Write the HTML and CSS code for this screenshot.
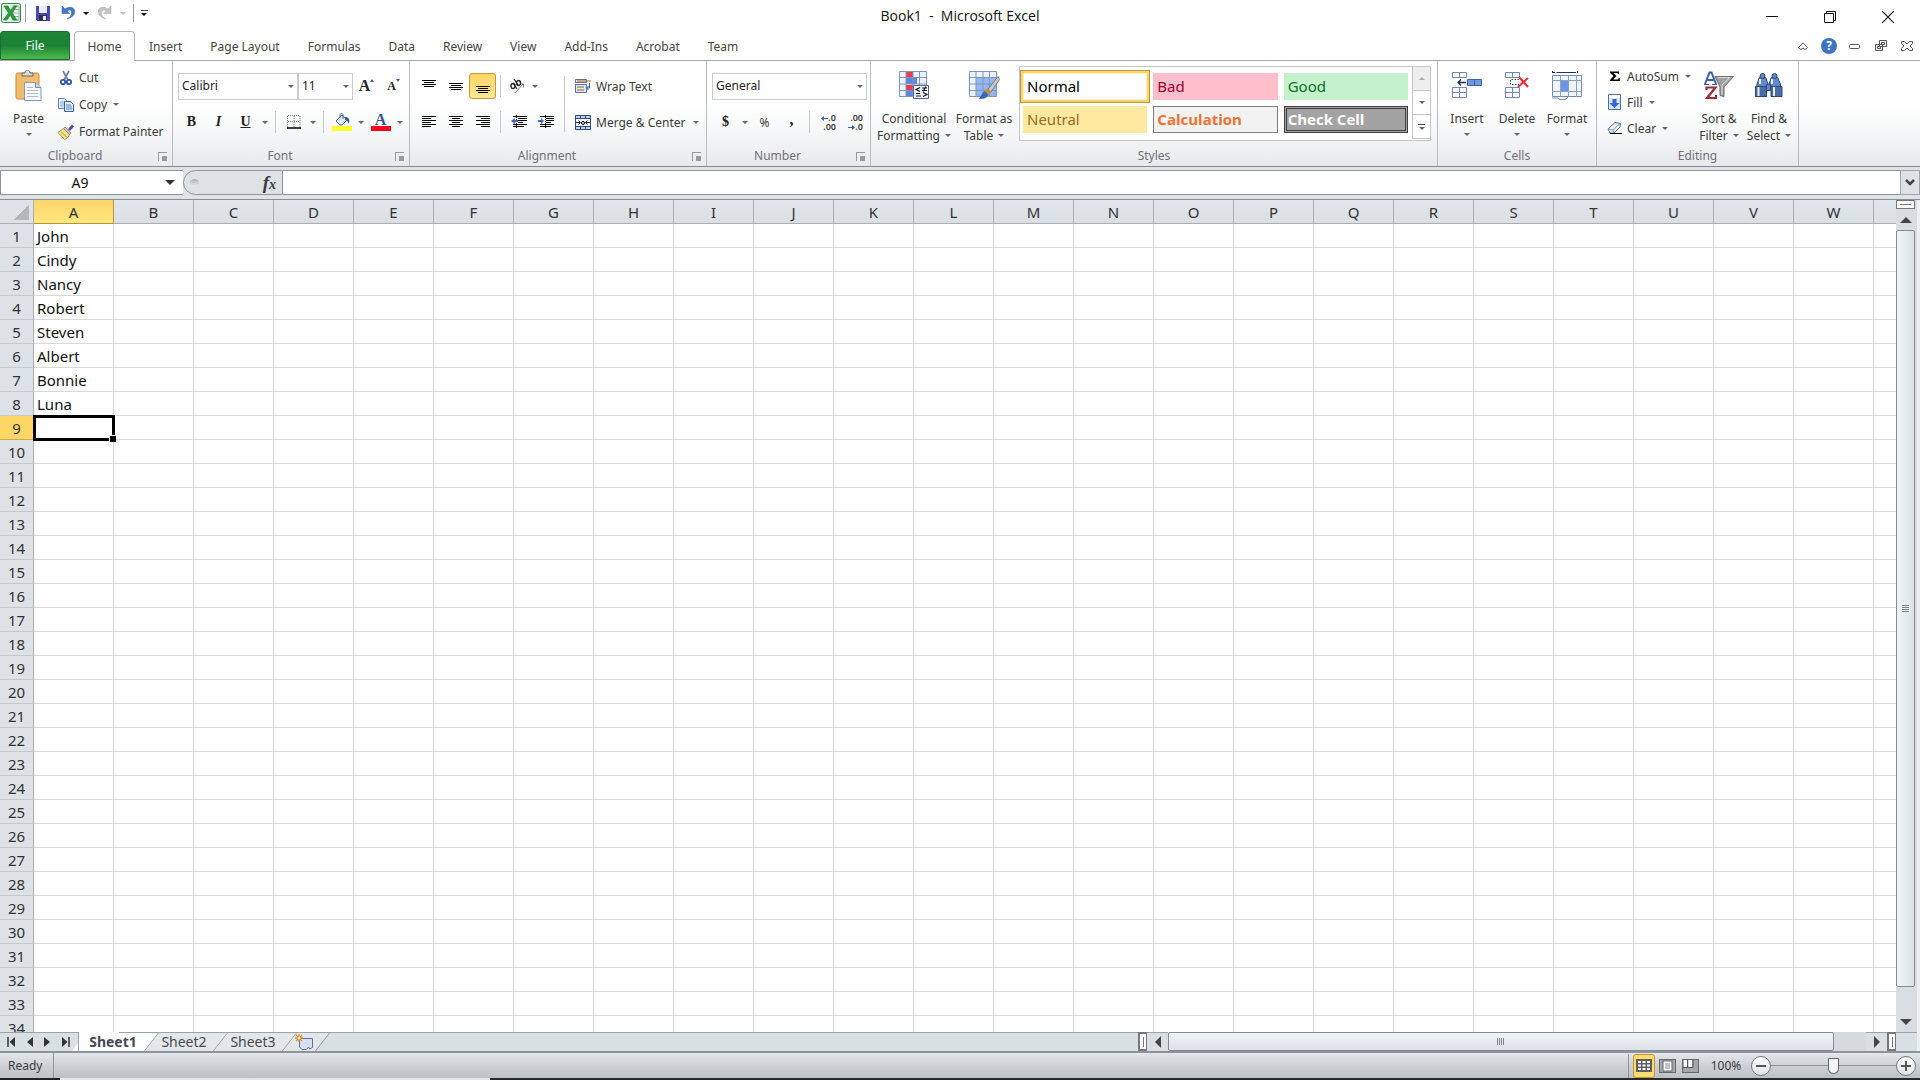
FILE: index.html
```html
<!DOCTYPE html>
<html lang="en">
<head>
    <meta charset="UTF-8">
    <meta name="viewport" content="width=device-width, initial-scale=1.0">
    <title>Book1 - Microsoft Excel</title>
    <link rel="stylesheet" href="styles.css">
</head>
<body>
<header class="titlebar">
    <div class="quick-access">
        <svg class="app-icon" width="20" height="20" viewBox="0 0 20 20"><rect x=".5" y=".5" width="19" height="19" rx="2" fill="#e4f2e2" stroke="#2f8a45"/><rect x="12" y="3" width="6" height="14" fill="#fff" stroke="#7dba83"/><path d="M12 6.500h6M12 10h6M12 13.500h6" stroke="#7dba83"/><path d="M3 3h4l2.500 4.500L13 3h3l-5 7 5 7h-4l-2.700-4.800L6 17H2.500l5-7z" fill="#2c9a43" stroke="#1c7531" stroke-width=".6"/></svg>
        <span class="sep"></span>
        <button class="qat-button" aria-label="Save"><svg width="14" height="15" viewBox="0 0 14 15"><path d="M0 0h14v15H1.500L0 13.500z" fill="#4a47ae"/><rect x="3" y="0" width="8" height="7" fill="#e9edfb"/><rect x="3" y="9" width="8" height="6" fill="#2e2a66"/><rect x="7" y="10" width="3" height="4" fill="#e9edfb"/></svg></button>
        <button class="qat-button" aria-label="Undo"><svg width="14" height="14" viewBox="0 0 14 14"><path d="M1 0v7.500h7.500L6 5.200C8 3 10.800 4 10.600 7c-.2 2.500-2 4.500-4.600 6 4-1 7.500-3.500 7.700-7C14 1 8 0 4 3z" fill="#4377cb" stroke="#2d59ad" stroke-width=".5"/></svg></button>
        <button class="drop dark" aria-label="Undo list"></button>
        <button class="qat-button" aria-label="Redo"><svg width="14" height="14" viewBox="0 0 14 14"><path d="M13 0v7.500H5.500L8 5.200C6 3 3.200 4 3.400 7c.2 2.500 2 4.500 4.600 6-4-1-7.500-3.500-7.700-7C0 1 6 0 10 3z" fill="#c4c4c4" stroke="#a5a5a5" stroke-width=".5"/></svg></button>
        <button class="drop pale" aria-label="Redo list"></button>
        <span class="sep"></span>
        <button class="drop dark lined" aria-label="Customize Quick Access Toolbar"></button>
    </div>
    <div class="window-title">Book1&nbsp; -&nbsp; Microsoft Excel</div>
    <div class="window-buttons">
        <button aria-label="Minimize"><svg width="12" height="12"><path d="M0 5.500h12" stroke="#111"/></svg></button>
        <button aria-label="Restore"><svg width="12" height="12" fill="none" stroke="#111"><path d="M.5 2.500h9v9h-9zM2.500 2.500v-2h9v9h-2"/></svg></button>
        <button aria-label="Close"><svg width="12" height="12"><path d="M0 0l12 12M12 0L0 12" stroke="#111" stroke-width="1.200"/></svg></button>
    </div>
</header>

<nav class="tabs">
    <button class="tab file">File</button>
    <button class="tab active">Home</button>
    <button class="tab">Insert</button>
    <button class="tab">Page Layout</button>
    <button class="tab">Formulas</button>
    <button class="tab">Data</button>
    <button class="tab">Review</button>
    <button class="tab">View</button>
    <button class="tab">Add-Ins</button>
    <button class="tab">Acrobat</button>
    <button class="tab">Team</button>
    <div class="book-buttons">
        <button aria-label="Minimize the Ribbon"><svg width="10" height="8" viewBox="0 0 10 8"><path d="M.5 5.500L5 .8l4.500 4.700-1.500 1.700H6L5 6 4 7.200H2z" fill="#fff" stroke="#555"/></svg></button>
        <button class="help" aria-label="Help"><span>?</span></button>
        <button aria-label="Minimize Window"><svg width="12" height="6"><rect x=".5" y="1.500" width="10" height="4" rx="1" fill="#fff" stroke="#555"/></svg></button>
        <button aria-label="Restore Window"><svg width="12" height="12" fill="#fff" stroke="#555"><path d="M4.500.5h7v6h-7zM6.500 2.500h3v2h-3zM.5 4.500h7v6h-7zM2.500 6.500h3v2h-3z"/></svg></button>
        <button aria-label="Close Window"><svg width="12" height="10" viewBox="0 0 12 10"><path d="M.5.5h3L6 3 8.500.5h3v2L9 5l2.500 2.500v2h-3L6 7 3.500 9.500h-3v-2L3 5 .5 2.500z" fill="#fff" stroke="#555"/></svg></button>
    </div>
</nav>

<section class="ribbon">
    <div class="group clipboard">
        <div class="group-body">
            <button class="big">
                <svg width="28" height="32" viewBox="0 0 28 32"><rect x="1" y="3" width="23" height="26" rx="1.500" fill="#efbd6b" stroke="#c48b3c"/><path d="M7 6V3h3c0-4 5-4 5 0h3v3z" fill="#dcdcdc" stroke="#666"/><path d="M9.500 12.500h11l5.500 5v13H9.500z" fill="#f6f9ff" stroke="#8499bd"/><path d="M20.500 12.500v5H26" fill="#c9d8ef" stroke="#6f88b5"/><path d="M12 17.500h6M12 20.500h11M12 23.500h11M12 26.500h11" stroke="#a9b9d6"/></svg>
                <span>Paste</span><i class="drop-arrow"></i>
            </button>
            <div class="stack">
                <button class="small"><svg width="18" height="16" viewBox="0 0 18 16"><path d="M6 1l5 9M12 1L7 10" stroke="#72829c" stroke-width="1.800"/><circle cx="6" cy="12" r="2.200" fill="none" stroke="#2d59ad" stroke-width="1.800"/><circle cx="12" cy="12" r="2.200" fill="none" stroke="#2d59ad" stroke-width="1.800"/></svg>Cut</button>
                <button class="small"><svg width="18" height="16" viewBox="0 0 18 16"><path d="M1.500 1.500h6l2 2v8h-8z" fill="#edf3fd" stroke="#5b7fbd"/><path d="M3 5h5M3 7h4M3 9h4" stroke="#83a1d4"/><path d="M7.500 4.500h6l3 3v7h-9z" fill="#dfeafb" stroke="#3762ac"/><path d="M9 8h5M9 10h6M9 12h6" stroke="#5b84c9"/></svg>Copy<i class="drop-arrow"></i></button>
                <button class="small"><svg width="18" height="16" viewBox="0 0 18 16"><path d="M11 5l4-4.500 2 2L13 7z" fill="#54489b"/><path d="M8 3l6 6-1.500 1.500L6.500 4.500z" fill="#c8c8d2" stroke="#555" stroke-width=".6"/><path d="M6.500 4.500l6 6c-1 3-3 4.500-5 5L1 8.500z" fill="#f5e38c" stroke="#8d7430" stroke-width=".7"/><path d="M4 7.500l6 6" stroke="#b5973f"/></svg>Format Painter</button>
            </div>
        </div>
        <div class="group-label with-launcher">Clipboard<button class="launcher" aria-label="Clipboard options"></button></div>
    </div>

    <div class="group font">
        <div class="group-body rows">
            <div class="tool-row">
                <label class="combo family"><select aria-label="Font"><option>Calibri</option></select></label>
                <label class="combo size"><select aria-label="Font Size"><option>11</option></select></label>
                <button class="tool" aria-label="Increase Font Size"><span class="serif large">A</span><i class="tri-up"></i></button>
                <button class="tool" aria-label="Decrease Font Size"><span class="serif">A</span><i class="tri-down"></i></button>
            </div>
            <div class="tool-row">
                <button class="tool serif">B</button>
                <button class="tool serif italic">I</button>
                <button class="tool serif underline">U</button>
                <button class="drop" aria-label="Underline style"></button>
                <span class="sep"></span>
                <button class="tool" aria-label="Borders"><svg width="14" height="14"><path d="M.5 1v11M7 1v11M13 1v11M1 .5h12M1 6.500h12" fill="none" stroke="#777" stroke-dasharray="1 1"/><path d="M0 13h14" stroke="#000" stroke-width="1.500"/></svg></button>
                <button class="drop" aria-label="Border list"></button>
                <span class="sep"></span>
                <button class="tool" aria-label="Fill Color"><svg width="20" height="18" viewBox="0 0 20 18"><path d="M4 8l6-6 5 5-5 5H8z" fill="#dfe7f5" stroke="#4d6491"/><path d="M8 5V2c0-2 3-2 3 0v4" fill="none" stroke="#4d6491"/><path d="M13 4c4 0 5 2 4 7-1-2-2-4-4-4z" fill="#2f5da8"/><rect y="13" width="20" height="5" fill="#ffff2c"/></svg></button>
                <button class="drop" aria-label="Fill color list"></button>
                <button class="tool font-color" aria-label="Font Color">A</button>
                <button class="drop" aria-label="Font color list"></button>
            </div>
        </div>
        <div class="group-label with-launcher">Font<button class="launcher" aria-label="Font options"></button></div>
    </div>

    <div class="group alignment">
        <div class="group-body">
            <div class="rows">
                <div class="tool-row">
                    <button class="tool" aria-label="Top Align"><svg width="14" height="14"><path d="M0 1.500h14M2 3.500h10M0 5.500h14M2 7.500h10" stroke="#000"/></svg></button>
                    <button class="tool" aria-label="Middle Align"><svg width="14" height="14"><path d="M0 4.500h14M2 6.500h10M0 8.500h14M2 10.500h10" stroke="#000"/></svg></button>
                    <button class="tool selected" aria-label="Bottom Align"><svg width="14" height="14"><path d="M0 7.500h14M2 9.500h10M0 11.500h14M2 13.500h10" stroke="#000"/></svg></button>
                    <span class="sep"></span>
                    <button class="tool orientation" aria-label="Orientation"><svg width="16" height="16" viewBox="0 0 16 16"><path d="M6 15l8-9M11 6h3.500v3.500" fill="none" stroke="#777"/><g fill="none" stroke="#222" stroke-width="1.300"><ellipse cx="4" cy="8" rx="2" ry="2.500"/><path d="M4 5l4 6"/><ellipse cx="9.500" cy="5" rx="2" ry="2.500"/><path d="M5 1l4 6"/></g></svg></button>
                    <button class="drop" aria-label="Orientation list"></button>
                </div>
                <div class="tool-row">
                    <button class="tool" aria-label="Align Left"><svg width="14" height="12"><path d="M0 .5h14M0 2.500h9M0 4.500h14M0 6.500h9M0 8.500h14M0 10.500h9" stroke="#000"/></svg></button>
                    <button class="tool" aria-label="Center"><svg width="14" height="12"><path d="M0 .5h14M3 2.500h8M0 4.500h14M3 6.500h8M0 8.500h14M3 10.500h8" stroke="#000"/></svg></button>
                    <button class="tool" aria-label="Align Right"><svg width="14" height="12"><path d="M0 .5h14M5 2.500h9M0 4.500h14M5 6.500h9M0 8.500h14M5 10.500h9" stroke="#000"/></svg></button>
                    <span class="sep"></span>
                    <button class="tool" aria-label="Decrease Indent"><svg width="16" height="14"><path d="M2 1.500h14M7 3.500h9M7 5.500h9M7 7.500h5M2 9.500h14M2 11.500h11" stroke="#000"/><path d="M5.500 0v14" stroke="#000" stroke-dasharray="1 1"/><path d="M0 6l4-3v2h3v2H4v2z" fill="#3b66bd"/></svg></button>
                    <button class="tool" aria-label="Increase Indent"><svg width="16" height="14"><path d="M2 1.500h14M8 3.500h8M8 5.500h8M8 7.500h5M2 9.500h14M2 11.500h11" stroke="#000"/><path d="M7.500 0v14" stroke="#000" stroke-dasharray="1 1"/><path d="M6 6L3 3v2H0v2h3v2z" fill="#3b66bd"/></svg></button>
                </div>
            </div>
            <span class="sep tall"></span>
            <div class="rows">
                <button class="small"><svg width="16" height="16" viewBox="0 0 16 16"><path d="M.5 1.500h11v3H.5zM.5 6.500h11v8H.5z" fill="#dbe7f7" stroke="#5b7396"/><path d="M2 3h14" stroke="#a76c2c"/><path d="M2 9h7M2 12h7" stroke="#a76c2c"/><path d="M14.500 5v5h-3M13.500 8l-2 2 2 2" fill="none" stroke="#2d59ad"/></svg>Wrap Text</button>
                <button class="small"><svg width="16" height="15" viewBox="0 0 16 15"><path d="M.5.500h15v14H.5z" fill="#bfd2ee" stroke="#2c4a7c"/><path d="M.5 3.500h15M.5 11.500h15M5.500.5v3M10.500.5v3M5.500 11.500v3M10.500 11.500v3" stroke="#2c4a7c"/><path d="M1 4h14v7H1z" fill="#f3f7fd"/><path d="M1 7.500h4M3.500 5.500l2 2-2 2M15 7.500h-4M12.500 5.500l-2 2 2 2" fill="none" stroke="#222"/><circle cx="8" cy="8" r="1.500" fill="none" stroke="#000"/></svg>Merge &amp; Center<i class="drop-arrow"></i></button>
            </div>
        </div>
        <div class="group-label with-launcher">Alignment<button class="launcher" aria-label="Alignment options"></button></div>
    </div>

    <div class="group number">
        <div class="group-body rows">
            <div class="tool-row">
                <label class="combo format"><select aria-label="Number Format"><option>General</option></select></label>
            </div>
            <div class="tool-row">
                <button class="tool serif">$</button>
                <button class="drop" aria-label="Accounting format list"></button>
                <button class="tool">%</button>
                <button class="tool serif comma">,</button>
                <span class="sep"></span>
                <button class="tool decimals" aria-label="Increase Decimal"><span><svg width="7" height="5"><path d="M0 2.500L3 0v2h4v1H3v2z" fill="#3561ac"/></svg>.0</span><span>.00</span></button>
                <button class="tool decimals" aria-label="Decrease Decimal"><span>.00</span><span><svg width="7" height="5"><path d="M7 2.500L4 0v2H0v1h4v2z" fill="#3561ac"/></svg>.0</span></button>
            </div>
        </div>
        <div class="group-label with-launcher">Number<button class="launcher" aria-label="Number options"></button></div>
    </div>

    <div class="group styles">
        <div class="group-body">
            <button class="big wide">
                <svg width="31" height="30" viewBox="0 0 31 30"><path d="M.5.5h27v25H.5z" fill="#edf3fc" stroke="#7d96c0"/><path d="M7 1h7v5H7zM7 14h11v6H7z" fill="#f23a4e"/><path d="M7 7h11v6H7zM7 20h7v5H7z" fill="#5f86da"/><path d="M7 .5v25M14 .5v25M20.500.5v25M.5 6.500h27M.5 13h27M.5 19.500h27" stroke="#7d96c0" fill="none"/><path d="M14.500 14.500h15v13h-15z" fill="#f5f8ff" stroke="#4d6894"/><path d="M21 16.500l-4 2 4 2M17 22.500h4M17 25h5M23 17h5M23 19.500h5M27 15.500l-3 5M24 21.500l4 2-4 2" stroke="#111" stroke-width="1.200" fill="none"/></svg>
                <span>Conditional<br>Formatting<i class="drop-arrow"></i></span>
            </button>
            <button class="big wide">
                <svg width="31" height="30" viewBox="0 0 31 30"><path d="M.5.5h27v25H.5z" fill="#edf3fc" stroke="#7d96c0"/><path d="M7 7h20v18H7z" fill="#95b7ee"/><path d="M7 .5v25M14 .5v25M20.500.5v25M.5 6.500h27M.5 13h27M.5 19.500h27" stroke="#7d96c0" fill="none"/><path d="M29 5.500l1.500 3-9 13-3-2.500z" fill="#c9ccd2" stroke="#666" stroke-width=".8"/><path d="M18.500 17l4 4-3 3-4-4z" fill="#c88b4a"/><path d="M15.500 20l4 4c-2 4-6 4-10 4 3-2 3-6 6-8z" fill="#3a68b4"/></svg>
                <span>Format as<br>Table<i class="drop-arrow"></i></span>
            </button>
            <div class="gallery">
                <div class="gallery-items">
                    <button class="style-item normal">Normal</button>
                    <button class="style-item bad">Bad</button>
                    <button class="style-item good">Good</button>
                    <button class="style-item neutral">Neutral</button>
                    <button class="style-item calculation">Calculation</button>
                    <button class="style-item check-cell">Check Cell</button>
                </div>
                <div class="gallery-scroll">
                    <button class="drop up" aria-label="Row up" disabled></button>
                    <button class="drop" aria-label="Row down"></button>
                    <button class="drop lined" aria-label="More styles"></button>
                </div>
            </div>
        </div>
        <div class="group-label">Styles</div>
    </div>

    <div class="group cells">
        <div class="group-body">
            <button class="big">
                <svg width="32" height="30" viewBox="0 0 32 30"><g fill="#f6f9fe" stroke="#7489ae"><path d="M1.500 1.500h14v5h-14zM8.500 1.500v5M1.500 16.500h14v10h-14zM8.500 16.500v10M1.500 21.500h14"/><path d="M16.500 8.500h14v6h-14zM23.500 8.500v6" fill="#7199e2" stroke="#3a62ad"/></g><path d="M7 11.500h8M10 8.500l-3 3 3 3" fill="none" stroke="#222f4a" stroke-width="1.400"/></svg>
                <span>Insert</span><i class="drop-arrow"></i>
            </button>
            <button class="big">
                <svg width="32" height="30" viewBox="0 0 32 30"><g fill="#f6f9fe" stroke="#7489ae"><path d="M4.500 1.500h14v5h-14zM11.500 1.500v5M4.500 16.500h14v10h-14zM11.500 16.500v10M4.500 21.500h14"/></g><path d="M18 8.500H9.500v5H18" fill="none" stroke="#27407a" stroke-dasharray="1.500 1.500"/><path d="M17 16l10-9M18 6l9 10" stroke="#ee2b35" stroke-width="2"/></svg>
                <span>Delete</span><i class="drop-arrow"></i>
            </button>
            <button class="big">
                <svg width="32" height="30" viewBox="0 0 32 30"><path d="M1.500 0v3M26.500 0v3M2 1.500h24" stroke="#26375d" stroke-dasharray="2 1.500"/><path d="M6 1.500h17" stroke="#26375d"/><path d="M1.500 4.500h29v21h-29z" fill="#f0f5fd" stroke="#7489ae"/><path d="M9.500 9.500h8v11h-8z" fill="#6c95e3"/><path d="M9.500 4.500v21M17.500 4.500v21M25.500 4.500v21M1.500 9.500h29M1.500 20.500h29" fill="none" stroke="#8ca0c4"/><path d="M1 27h6l2 1.500h5l3-2" fill="none" stroke="#7489ae"/></svg>
                <span>Format</span><i class="drop-arrow"></i>
            </button>
        </div>
        <div class="group-label">Cells</div>
    </div>

    <div class="group editing">
        <div class="group-body">
            <div class="stack">
                <button class="small"><svg width="16" height="14" viewBox="0 0 16 14"><path d="M3 2.500h9V5h-1l-.7-1H6.500l3 3-3.300 3.500H11l.8-1.500h1v3H3v-1L6.500 7 3 3.500z" fill="#000"/></svg>AutoSum<i class="drop-arrow"></i></button>
                <button class="small"><svg width="16" height="16" viewBox="0 0 16 16"><path d="M1.500.5h12v15h-12z" fill="#d6e4f8" stroke="#4e6ea5"/><path d="M2 1h11v3H2z" fill="#fff"/><path d="M5.500 5h4v4h3l-5 5-5-5h3z" fill="#3467cd"/></svg>Fill<i class="drop-arrow"></i></button>
                <button class="small"><svg width="16" height="14" viewBox="0 0 16 14"><path d="M1 8l7-6.500 5.500 1L13 6l-6 6H3z" fill="#f2f6fc" stroke="#52698f"/><path d="M1.500 8l4.500 1 7-6.500M6 9l.5 3" fill="none" stroke="#7c93ba"/><path d="M3 12.500h12" stroke="#000"/></svg>Clear<i class="drop-arrow"></i></button>
            </div>
            <button class="big">
                <svg width="32" height="30" viewBox="0 0 32 30"><path d="M12 5.500h18.500L21 16v9.500l-4-1V16z" fill="#a1a1a1" stroke="#6d6d6d"/><path d="M15 6.500h12L19 14v10" fill="none" stroke="#ddd"/><path d="M2 13L6.500 1.500h2L13 13M4.500 9h6" fill="none" stroke="#3561ac" stroke-width="2"/><path d="M1 13.500h5M9 13.500h5" stroke="#3561ac"/><path d="M3.500 19v-2.500h9L4 27h9v-3" fill="none" stroke="#982f3b" stroke-width="2.200"/></svg>
                <span>Sort &amp;<br>Filter<i class="drop-arrow"></i></span>
            </button>
            <button class="big">
                <svg width="32" height="30" viewBox="0 0 32 30"><g fill="#6489c8" stroke="#2c4675"><path d="M5.500 9c0-5 8-5 8 0l1.500 4v5H3.500l.5-5zM17.500 9c0-5 8-5 8 0l2 4v5H16v-5z"/><path d="M2.500 15.500h11v10h-11zM18 15.500h11v10H18z" fill="#4a6ca8"/><path d="M13.500 13.500h4v6h-4z"/><circle cx="9.500" cy="5" r="2.500"/><circle cx="21.500" cy="5" r="2.500"/></g><path d="M5.500 16v9M21 16v9M7 8v5M19 8v5" stroke="#e4edfc" stroke-width="2"/></svg>
                <span>Find &amp;<br>Select<i class="drop-arrow"></i></span>
            </button>
        </div>
        <div class="group-label">Editing</div>
    </div>
</section>

<div class="formula-bar">
    <label class="name-box"><input type="text" value="A9" aria-label="Name Box"><i class="drop-arrow"></i></label>
    <div class="formula-tools"><i class="knob"></i><button class="fx" aria-label="Insert Function"><span>f</span><sub>x</sub></button></div>
    <input class="formula-input" type="text" aria-label="Formula Bar">
    <button class="expand" aria-label="Expand Formula Bar"><svg width="10" height="7"><path d="M1 1l4 4 4-4" fill="none" stroke="#444" stroke-width="2.500"/></svg></button>
</div>

<main class="workbook">
    <div class="sheet">
        <table class="grid">
            <thead><tr id="column-heads"></tr></thead>
            <tbody id="grid-rows"></tbody>
        </table>
    </div>
    <div class="v-scroll">
        <div class="split-box"></div>
        <button aria-label="Scroll up"><i class="arrow-up"></i></button>
        <div class="v-thumb"><i></i></div>
        <button aria-label="Scroll down"><i class="arrow-down"></i></button>
    </div>
</main>

<div class="sheet-bar">
    <div class="sheet-nav">
        <button aria-label="First sheet"><svg width="8" height="10"><path d="M1 0v10" stroke="#333" stroke-width="1.500"/><path d="M8 0v10L2.500 5z" fill="#333"/></svg></button>
        <button aria-label="Previous sheet"><svg width="6" height="10"><path d="M6 0v10L0 5z" fill="#333"/></svg></button>
        <button aria-label="Next sheet"><svg width="6" height="10"><path d="M0 0v10l6-5z" fill="#333"/></svg></button>
        <button aria-label="Last sheet"><svg width="8" height="10"><path d="M7 0v10" stroke="#333" stroke-width="1.500"/><path d="M0 0v10l5.500-5z" fill="#333"/></svg></button>
    </div>
    <button class="sheet-tab active">Sheet1</button>
    <button class="sheet-tab">Sheet2</button>
    <button class="sheet-tab">Sheet3</button>
    <button class="sheet-tab new-sheet" aria-label="Insert Worksheet"><svg width="18" height="16" viewBox="0 0 18 16"><path d="M4.500 4.500h13v9l-3 1.500-1-2-2 2.500H7L4.500 13z" fill="#d5e0f3" stroke="#5b709b"/><path d="M4 0v8M0 4h8M1 1l6 6M7 1L1 7" stroke="#de8a2c" stroke-width="1.300"/><circle cx="4" cy="4" r="1.500" fill="#fff3b0"/></svg></button>
    <div class="h-scroll">
        <i class="tab-split"></i>
        <button aria-label="Scroll left"><i class="arrow-left"></i></button>
        <div class="h-track"><div class="h-thumb"><i></i></div></div>
        <button aria-label="Scroll right"><i class="arrow-right"></i></button>
        <i class="tab-split end"></i>
    </div>
    <div class="corner"></div>
</div>

<footer class="status-bar">
    <span class="status-text">Ready</span>
    <div class="view-buttons">
        <button class="selected" aria-label="Normal"><svg width="16" height="13"><rect width="16" height="13" fill="#5f5f5f"/><path d="M2 2h3v2H2zM6.500 2h3v2h-3zM11 2h3v2h-3zM2 5.500h3v2H2zM6.500 5.500h3v2h-3zM11 5.500h3v2h-3zM2 9h3v2H2zM6.500 9h3v2h-3zM11 9h3v2h-3z" fill="#fff"/></svg></button>
        <button aria-label="Page Layout"><svg width="17" height="14"><rect x=".5" y=".5" width="16" height="13" fill="#a4a6a8" stroke="#66696c"/><rect x="4" y="2" width="9" height="10" fill="#fff" stroke="#666"/><path d="M6 5h5M6 7h5M6 9h5" stroke="#888"/></svg></button>
        <button aria-label="Page Break Preview"><svg width="17" height="14"><rect x=".5" y=".5" width="16" height="13" fill="#a4a6a8" stroke="#66696c"/><path d="M2 1h3v7H2zM6.500 1H10v7H6.500z" fill="#fff"/><path d="M1 8.500h10V0M5.500 0v8" fill="none" stroke="#555"/></svg></button>
    </div>
    <button class="zoom-level">100%</button>
    <div class="zoom-control">
        <button class="zoom-step" aria-label="Zoom out"><svg width="10" height="10"><path d="M0 5h10" stroke="#555" stroke-width="2"/></svg></button>
        <input type="range" min="0" max="100" value="50" aria-label="Zoom">
        <button class="zoom-step" aria-label="Zoom in"><svg width="10" height="10"><path d="M0 5h10M5 0v10" stroke="#555" stroke-width="2"/></svg></button>
    </div>
</footer>
<div class="bottom-edge"></div>

<script src="grid.js"></script>
</body>
</html>
```
FILE: styles.css
```css
* {
    box-sizing: border-box;
}

body {
    margin: 0;
    height: 100vh;
    display: flex;
    flex-direction: column;
    overflow: hidden;
    background-color: #fff;
    color: #3b3b3b;
    font-family: "Noto Sans", "Open Sans", sans-serif;
    font-size: 12px;
}

button, input, select {
    font: inherit;
    color: inherit;
}

button {
    background: none;
    border: none;
    padding: 0;
    display: flex;
    align-items: center;
    justify-content: center;
}

svg {
    flex: none;
}

/* shared bits */

.sep {
    width: 1px;
    height: 22px;
    margin: 0 4px;
    background-color: #c6c8ca;
}

.drop {
    width: 12px;
    height: 24px;
    flex-direction: column;
    gap: 2px;
}

.drop::after, .drop-arrow {
    content: "";
    border: 3px solid transparent;
    border-top-color: #666;
    border-bottom-width: 0;
}

.drop.up::after {
    border-width: 0 3px 3px;
    border-bottom-color: #aaa;
}

.drop.dark::after {
    border-top-color: #000;
}

.drop.pale::after {
    border-top-color: #bbb;
}

.drop.lined::before {
    content: "";
    width: 7px;
    height: 1px;
    background-color: #444;
}

/* title bar */

.titlebar {
    display: grid;
    grid-template-columns: 1fr auto 1fr;
    height: 31px;
}

.quick-access {
    display: flex;
    align-items: center;
    height: 26px;
    padding-left: 1px;
}

.quick-access .sep {
    height: 18px;
    background-color: #999;
}

.quick-access .drop::after {
    border-width: 3px 3px 0;
}

.qat-button {
    width: 25px;
    height: 22px;
}

.window-title {
    font-family: "Open Sans", sans-serif;
    font-size: 14px;
    line-height: 32px;
    color: #111;
}

.window-buttons {
    display: flex;
    justify-content: flex-end;
    padding-right: 3px;
}

.window-buttons button {
    width: 58px;
    height: 34px;
}

/* tabs */

.tabs {
    display: flex;
    height: 30px;
    border-bottom: 1px solid #a9adb1;
}

.tab {
    height: 30px;
    padding: 0 14px;
    color: #444;
}

.tab.file {
    width: 70px;
    height: 29px;
    margin-right: 4px;
    padding: 0;
    border: 1px solid #17702f;
    border-radius: 3px 3px 0 0;
    background: linear-gradient(#1e8436, #1b8234 50%, #4fb94d);
    color: #fff;
}

.tab.active {
    width: 61px;
    padding: 0;
    border: 1px solid #b3b6ba;
    border-bottom: none;
    border-radius: 4px 4px 0 0;
    background-color: #fff;
}

.book-buttons {
    display: flex;
    margin-left: auto;
}

.book-buttons button {
    width: 26px;
    height: 29px;
}

.help span {
    width: 16px;
    height: 16px;
    border-radius: 50%;
    background-color: #3f74c2;
    color: #fff;
    font-weight: bold;
    line-height: 16px;
}

/* ribbon */

.ribbon {
    display: flex;
    height: 106px;
    border-bottom: 1px solid #858a90;
    background: linear-gradient(#fff 40%, #f5f6f7 70%, #e7e9ec);
}

.group {
    display: flex;
    flex-direction: column;
    flex: none;
    border-right: 1px solid #b8bbbf;
}

.group-body {
    display: flex;
    height: 84px;
}

.group-label {
    position: relative;
    text-align: center;
    line-height: 21px;
    color: #6d7179;
}

.group-label.with-launcher {
    padding-right: 22px;
}

.launcher {
    position: absolute;
    right: 5px;
    top: 7px;
    width: 9px;
    height: 9px;
    border: 1px solid #999;
    border-width: 1px 0 0 1px;
    background: linear-gradient(#999, #999) right bottom / 5px 5px no-repeat;
}

.clipboard { width: 173px; }
.font { width: 237px; }
.alignment { width: 297px; }
.number { width: 164px; }
.styles { width: 567px; }
.cells { width: 159px; }
.editing { width: 202px; }

.rows {
    display: flex;
    flex-direction: column;
    gap: 10px;
    padding: 12px 0 0 5px;
}

.tool-row {
    display: flex;
    align-items: center;
    height: 26px;
}

.big {
    width: 50px;
    height: 84px;
    padding-top: 9px;
    flex-direction: column;
    justify-content: flex-start;
    line-height: 17px;
    white-space: nowrap;
}

.big svg {
    height: 32px;
    margin-bottom: 8px;
}

.big span .drop-arrow {
    display: inline-block;
    margin-left: 5px;
    vertical-align: 3px;
}

.big > .drop-arrow {
    margin-top: 6px;
}

.big.wide {
    width: 70px;
}

.clipboard .big {
    width: 57px;
}

.styles .group-body {
    padding-left: 8px;
}

.cells .group-body {
    padding-left: 4px;
}

.stack {
    display: flex;
    flex-direction: column;
    padding-top: 3px;
}

.small {
    height: 26px;
    justify-content: flex-start;
    gap: 5px;
    white-space: nowrap;
}

.stack .small {
    height: 27px;
    gap: 4px;
}

.small .drop-arrow {
    margin-left: 2px;
}

.editing .stack {
    width: 97px;
    padding: 2px 0 0 10px;
}

.editing .stack .small {
    height: 26px;
}

.combo {
    position: relative;
    height: 27px;
}

.combo select {
    appearance: none;
    width: 100%;
    height: 27px;
    padding: 0 3px 2px;
    border: 1px solid #c9ccd0;
    border-radius: 0;
    background-color: #fff;
    color: #1b1b2b;
}

.combo::after {
    content: "";
    position: absolute;
    right: 4px;
    top: 12px;
    border: 3px solid transparent;
    border-top-color: #666;
    border-bottom-width: 0;
}

.combo.family { width: 120px; }
.combo.size { width: 55px; }
.combo.format { width: 155px; }

.tool {
    width: 27px;
    height: 26px;
}

.tool.selected {
    border: 1px solid #c29b36;
    border-radius: 3px;
    background: linear-gradient(#fdd667, #fee795);
}

.tool.orientation {
    width: 24px;
}

.serif {
    font-family: "Liberation Serif", serif;
    font-size: 14px;
    font-weight: bold;
    color: #222;
}

span.serif {
    font-size: 12px;
}

span.serif.large {
    font-size: 16px;
}

.tri-up, .tri-down {
    align-self: flex-start;
    margin-top: 6px;
    border: 2px solid transparent;
}

.tri-up {
    border-bottom: 3px solid #3561ac;
    border-top: none;
}

.tri-down {
    border-top: 3px solid #3561ac;
    border-bottom: none;
}

.italic {
    font-style: italic;
}

.underline {
    text-decoration: underline;
}

.comma {
    padding-bottom: 4px;
    font-size: 16px;
}

.font-color {
    flex-direction: column;
    font-family: "Liberation Serif", serif;
    font-size: 16px;
    font-weight: bold;
    line-height: 13px;
    color: #34518f;
}

.font-color::after {
    content: "";
    width: 20px;
    height: 5px;
    background-color: #f4001c;
}

.decimals {
    flex-direction: column;
    align-items: flex-end;
    padding-right: 5px;
    font-size: 9px;
    font-weight: 600;
    line-height: 9px;
}

.sep.tall {
    height: 56px;
    margin: 15px 5px 0;
}

/* cell styles gallery */

.gallery {
    display: flex;
    flex: 1;
    height: 75px;
    margin: 5px 6px 0 0;
    border: 1px solid #c3c5c9;
    background-color: #fff;
}

.gallery-items {
    display: grid;
    flex: 1;
    grid-template-columns: repeat(3, 1fr);
    grid-auto-rows: 27px;
    gap: 6px;
    padding: 6px 4px 0 3px;
}

.style-item {
    justify-content: flex-start;
    padding: 0 3px 2px;
    font-size: 15px;
    border: 1px solid transparent;
}

.style-item.normal {
    color: #000;
    outline: 2px solid #f8d46c;
    border-color: #fff3c0;
    box-shadow: 0 0 0 3px #bf9638;
}

.style-item.bad { background-color: #ffbfca; color: #9c0030; }
.style-item.good { background-color: #c3f2cc; color: #0a7028; }
.style-item.neutral { background-color: #ffe9a0; color: #9c6b1e; }

.style-item.calculation {
    border-color: #7f7f7f;
    background-color: #f2f2f2;
    color: #f07030;
    font-family: "Open Sans", sans-serif;
    font-weight: bold;
}

.style-item.check-cell {
    border: 3px double #3f3f3f;
    padding: 0 1px 2px;
    background-color: #a3a3a3;
    color: #fff;
    font-family: "Open Sans", sans-serif;
    font-weight: bold;
}

.gallery-scroll .drop {
    width: 18px;
    border-left: 1px solid #c3c5c9;
    border-bottom: 1px solid #c3c5c9;
}

.gallery-scroll .drop:disabled {
    background-color: #eee;
}

/* formula bar */

.formula-bar {
    display: flex;
    height: 33px;
    padding: 3px 0 4px;
    background-color: #dfe3e6;
    border-bottom: 1px solid #8a8e93;
}

.name-box {
    display: flex;
    align-items: center;
    width: 183px;
    border: 1px solid #8f9499;
    border-right: none;
    background-color: #fff;
}

.name-box input {
    flex: 1;
    min-width: 0;
    border: none;
    padding: 0 6px 0 0;
    text-align: center;
    font-size: 14px;
    color: #111;
}

.name-box .drop-arrow {
    margin-right: 8px;
    border-width: 5px 5px 0;
    border-top-color: #333;
}

.formula-tools {
    display: flex;
    align-items: center;
    justify-content: space-between;
    width: 100px;
    padding: 0 6px;
    border: 1px solid #8f9499;
    border-radius: 13px 0 0 13px;
    background-color: #dce2e6;
}

.knob {
    width: 9px;
    height: 8px;
    border-radius: 50%;
    background: linear-gradient(#aaafb4, #eee);
}

.fx {
    align-items: baseline;
    font-family: "Liberation Serif", serif;
    font-size: 19px;
    font-weight: bold;
    font-style: italic;
    line-height: 22px;
}

.fx sub {
    font-size: 14px;
    line-height: 10px;
    vertical-align: baseline;
}

.formula-input {
    flex: 1;
    border: 1px solid #8f9499;
    border-width: 1px 0;
}

.expand {
    width: 20px;
    border: 1px solid #9fa4a9;
    background-color: #dce2e6;
}

/* worksheet */

.workbook {
    display: flex;
    flex: 1;
    min-height: 0;
}

.sheet {
    flex: 1;
    min-width: 0;
    overflow: hidden;
}

.grid {
    border-collapse: separate;
    border-spacing: 0;
    font-size: 15px;
    line-height: 20px;
}

.grid th {
    height: 24px;
    padding: 0;
    border-right: 1px solid #a9aeb3;
    border-bottom: 1px solid #a9aeb3;
    background-color: #dce2e5;
    color: #333;
    font-weight: normal;
}

.grid thead th {
    min-width: 80px;
    background: linear-gradient(#e1e6e9, #d9dfe3);
}

.grid thead th.select-all {
    min-width: 34px;
    background: linear-gradient(135deg, transparent 50%, #b3b8bc 50%) 14px 5px / 15px 15px no-repeat #dce2e5;
}

.grid tbody th {
    border-bottom-color: #c3c8cc;
}

.grid thead th.current {
    border-color: #c28e36;
    background: linear-gradient(#fdd46c, #fee87e);
}

.grid tbody th.current {
    background-color: #ffd767;
    border-bottom-color: #d9a648;
}

.grid td {
    height: 24px;
    padding: 0 3px;
    border-right: 1px solid #d6d8da;
    border-bottom: 1px solid #d6d8da;
    color: #111;
}

.grid td.current {
    position: relative;
    outline: 3px solid #000;
    outline-offset: -2px;
}

.grid td.current::after {
    content: "";
    position: absolute;
    right: -3px;
    bottom: -3px;
    width: 6px;
    height: 6px;
    border: 1px solid #fff;
    border-width: 1px 0 0 1px;
    background-color: #000;
    z-index: 1;
}

.v-scroll {
    display: flex;
    flex-direction: column;
    width: 24px;
    border-right: 3px solid #eceff1;
    background-color: #d8dde1;
}

.v-scroll button {
    width: 19px;
    height: 21px;
}

.v-scroll button:last-child {
    margin-top: 24px;
}

.split-box {
    height: 9px;
    margin-right: 2px;
    border: 1px solid #777;
    background: linear-gradient(#777, #777) center / 11px 1px no-repeat #fff;
}

.v-thumb {
    display: flex;
    align-items: center;
    justify-content: center;
    flex: 1;
    width: 19px;
    border: 1px solid #858b92;
    border-radius: 2px;
    background: linear-gradient(90deg, #f0f3f6, #dce2e7);
}

.v-thumb i {
    width: 7px;
    height: 8px;
    background: repeating-linear-gradient(#7d838a 0 1px, transparent 1px 2px);
}

.arrow-up, .arrow-down, .arrow-left, .arrow-right {
    border: 6px solid transparent;
}

.arrow-up { border-bottom-color: #444; border-top: none; }
.arrow-down { border-top-color: #444; border-bottom: none; }
.arrow-left { border-right-color: #444; border-left: none; }
.arrow-right { border-left-color: #444; border-right: none; }

/* sheet tabs */

.sheet-bar {
    display: flex;
    height: 21px;
    border-bottom: 2px solid #8b939c;
    background-color: #d9e0e4;
    box-shadow: inset 0 1px #9ba1a7;
    isolation: isolate;
}

.sheet-nav {
    display: flex;
    align-items: center;
    justify-content: space-between;
    width: 79px;
    padding: 0 8px 0 7px;
    border-right: 1px solid #999fa5;
}

.sheet-tab {
    position: relative;
    width: 69px;
    padding-right: 5px;
    font-size: 14px;
    line-height: 20px;
    color: #444b52;
}

.sheet-tab::before {
    content: "";
    position: absolute;
    inset: 1px 0 0;
    z-index: -1;
    border-right: 1px solid #8f959b;
    background-color: #e3e7ea;
    transform: skewX(-38deg);
}

.sheet-tab.active {
    width: 73px;
    background: linear-gradient(#fff, #fff) left / 40px 100% no-repeat;
    font-weight: bold;
}

.sheet-tab.active::before {
    background-color: #fff;
}

.sheet-tab.new-sheet {
    width: 33px;
}

.h-scroll {
    display: flex;
    width: 758px;
    margin-left: auto;
}

.h-scroll button {
    width: 21px;
}

.tab-split {
    width: 9px;
    border: 2px solid #777;
    border-right-width: 1px;
    background: linear-gradient(#777, #777) center / 1px 10px no-repeat #fff;
}

.h-track {
    flex: 1;
    padding-right: 32px;
    background-color: #d5dade;
}

.h-thumb {
    display: flex;
    align-items: center;
    justify-content: center;
    height: 19px;
    border: 1px solid #858b92;
    border-radius: 2px;
    background: linear-gradient(#f0f3f6, #dce2e7);
}

.h-thumb i {
    width: 8px;
    height: 7px;
    background: repeating-linear-gradient(90deg, #7d838a 0 1px, transparent 1px 2px);
}

.corner {
    width: 24px;
    border-right: 3px solid #eceff1;
}

/* status bar */

.status-bar {
    display: flex;
    align-items: center;
    height: 25px;
    padding-right: 4px;
    background: linear-gradient(#e4e7ea, #cdd1d5 50%, #bdc1c6);
}

.status-text {
    width: 54px;
    padding-left: 8px;
    line-height: 25px;
    border-right: 1px solid #8f9499;
}

.view-buttons {
    display: flex;
    gap: 1px;
    margin-left: auto;
    padding-left: 4px;
    border-left: 1px solid #8f9499;
}

.view-buttons button {
    width: 22px;
    height: 24px;
}

.view-buttons .selected {
    border: 1px solid #c8922c;
    border-radius: 3px;
    background-color: #ffdb73;
}

.zoom-level {
    width: 50px;
}

.zoom-control {
    display: flex;
    align-items: center;
}

.zoom-step {
    width: 20px;
    height: 20px;
    border: 1px solid #6f757b;
    border-radius: 50%;
    background: linear-gradient(#fff, #dfe2e5);
}

.zoom-control input {
    appearance: none;
    width: 125px;
    height: 20px;
    margin: 0;
    background: linear-gradient(#8b9793, #8b9793) center / 100% 1px no-repeat;
}

.zoom-control input::-webkit-slider-thumb {
    appearance: none;
    width: 11px;
    height: 16px;
    border: 1px solid #666;
    border-radius: 1px 1px 6px 6px;
    background-color: #f3f4f5;
}

.bottom-edge {
    height: 2px;
    background: linear-gradient(90deg, #222 60px, #e6e6e6 60px, #e6e6e6 490px, #2b2829 490px);
}
```
FILE: grid.js
```js
var names = ["John", "Cindy", "Nancy", "Robert", "Steven", "Albert", "Bonnie", "Luna"];
var columns = "ABCDEFGHIJKLMNOPQRSTUVW".split("");
var rowCount = 34;
var currentRow = 9;

// the last column has no letter, only its edge is in view
columns.push("");

// Column letters
var heads = '<th class="select-all"></th>';
columns.forEach(function (letter, i) {
    heads += '<th' + (i === 0 ? ' class="current"' : '') + '>' + letter + '</th>';
});
document.getElementById("column-heads").innerHTML = heads;

// Rows, with the names in column A
var rows = "";
for (var r = 1; r <= rowCount; r++) {
    var mark = r === currentRow ? ' class="current"' : '';
    rows += '<tr><th' + mark + '>' + r + '</th>';
    for (var c = 0; c < columns.length; c++) {
        rows += '<td' + (c === 0 ? mark : '') + '>' + (c === 0 && names[r - 1] ? names[r - 1] : '') + '</td>';
    }
    rows += '</tr>';
}
document.getElementById("grid-rows").innerHTML = rows;
```
